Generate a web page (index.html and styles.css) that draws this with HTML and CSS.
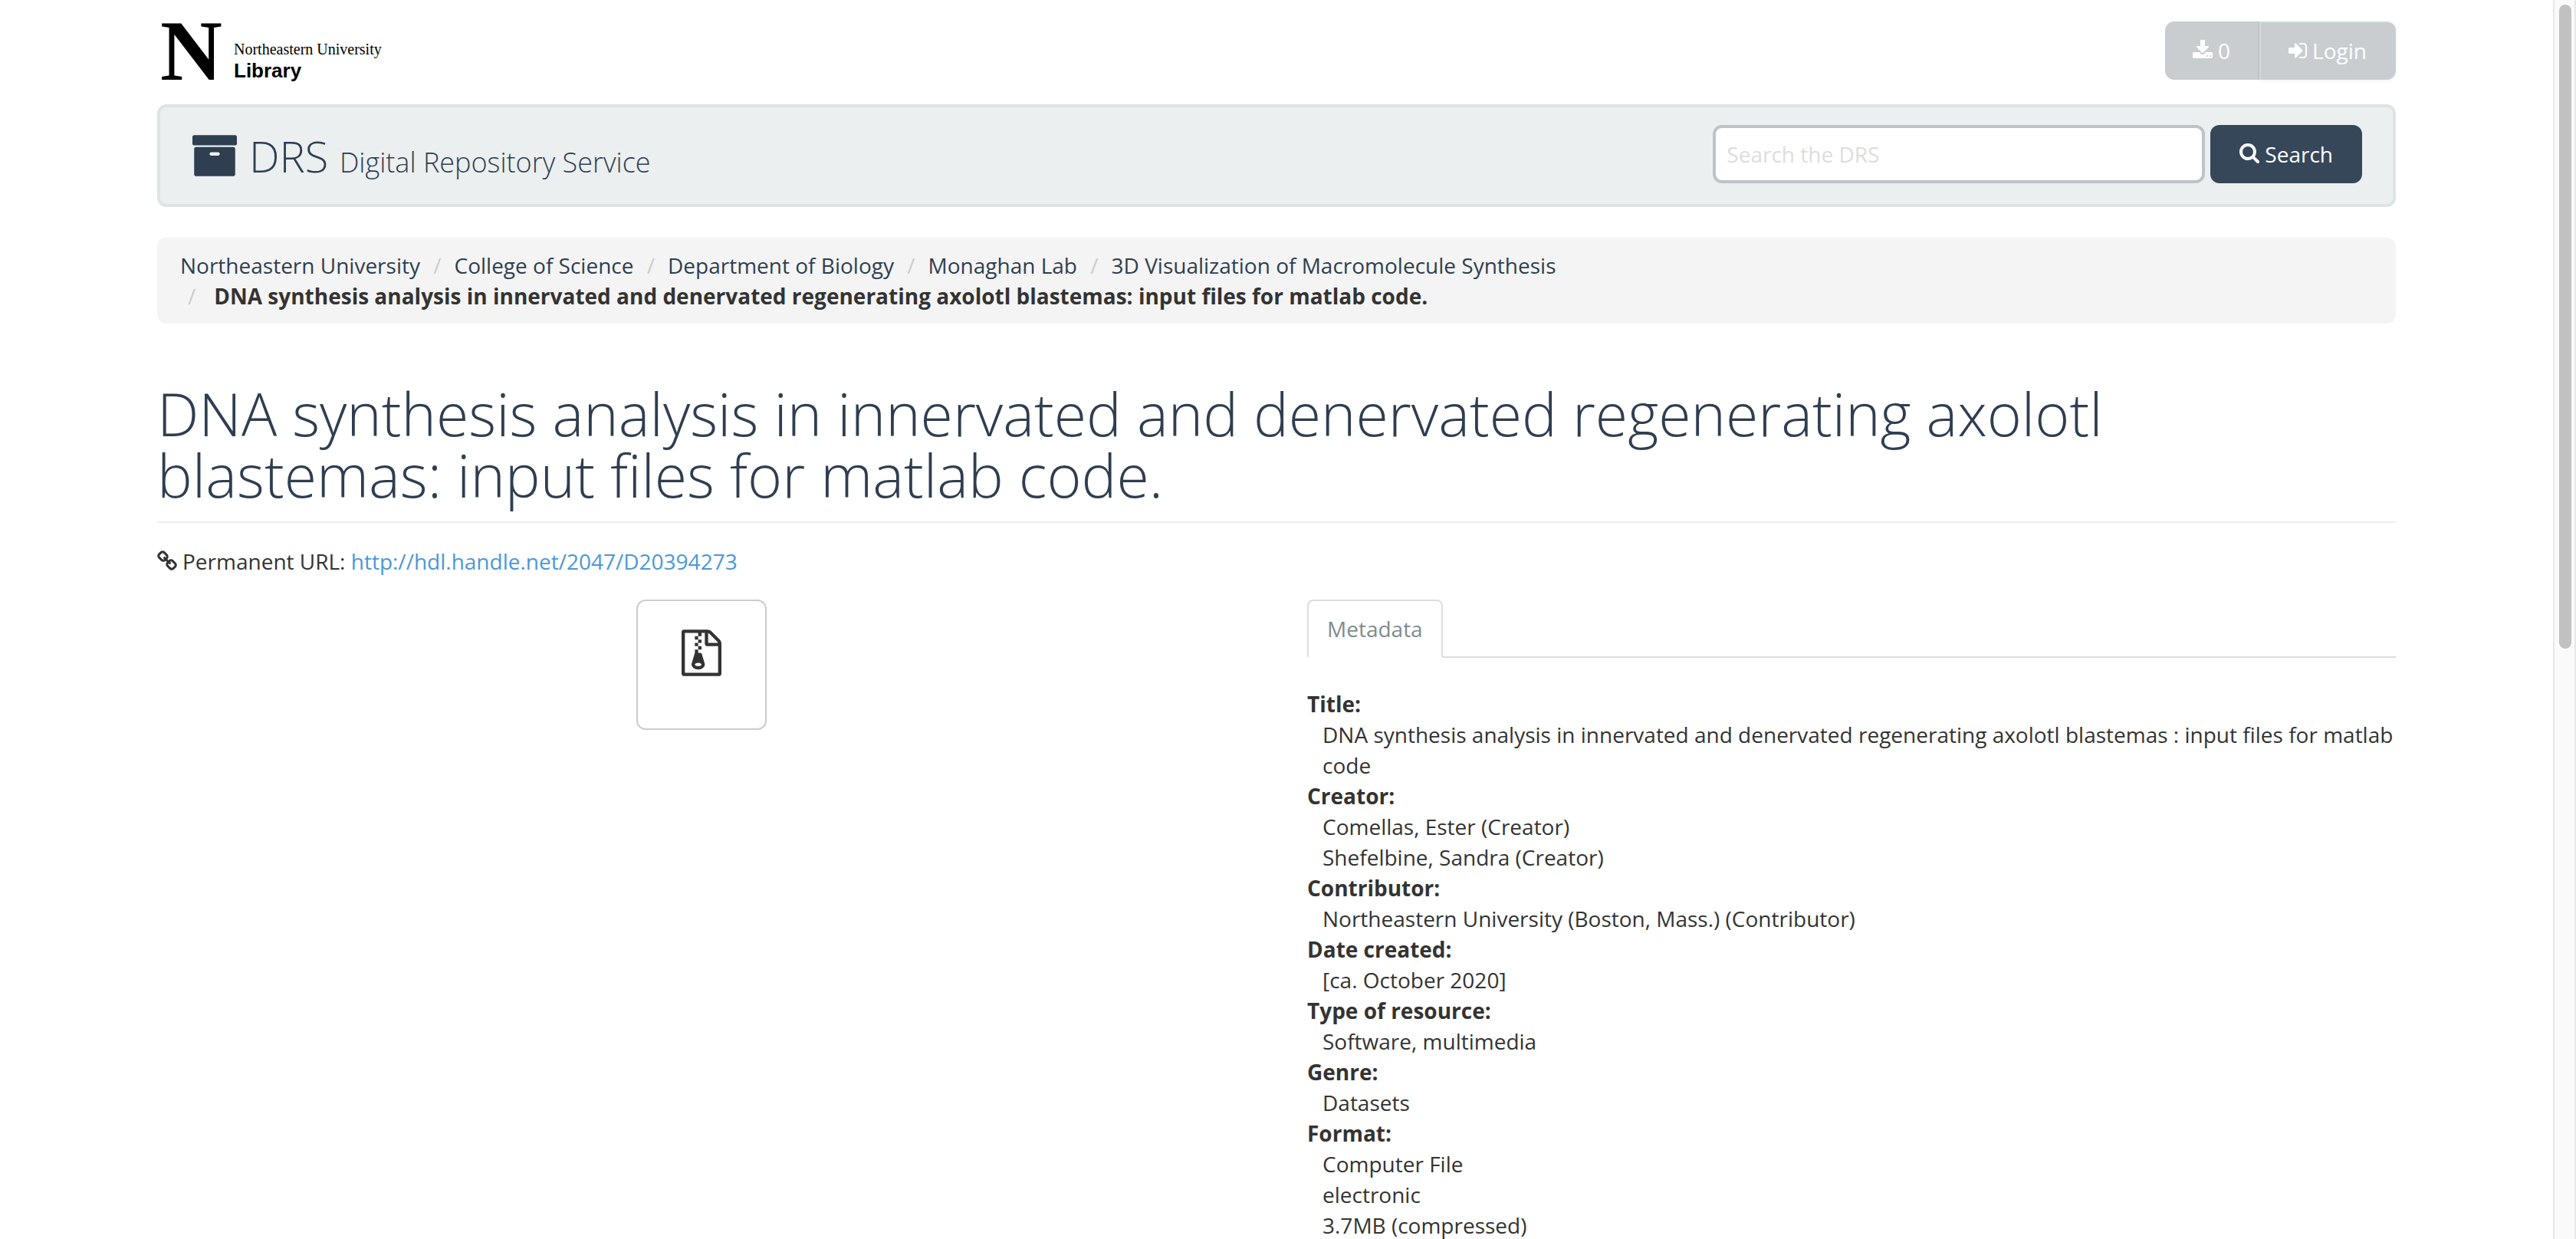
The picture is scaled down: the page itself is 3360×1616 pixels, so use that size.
FILE: index.html
```html
<!DOCTYPE html>
<html lang="en">
<head>
<meta charset="utf-8">
<title>DNA synthesis analysis - DRS</title>
<link rel="stylesheet" href="styles.css">
</head>
<body>
<div class="viewport">
<div class="page">
  <header class="topbar">
    <a class="logo" href="#">
      <span class="logo-mark">N</span>
      <span class="logo-words">
        <span class="logo-name">Northeastern University</span>
        <span class="logo-unit">Library</span>
      </span>
    </a>
    <div class="btn-group">
      <a class="btn btn-cart" href="#"><svg class="icon-26" viewBox="64 0 1664 1792"><path d="M1344 1344q0-26-19-45t-45-19-45 19-19 45 19 45 45 19 45-19 19-45zm256 0q0-26-19-45t-45-19-45 19-19 45 19 45 45 19 45-19 19-45zm128-224v320q0 40-28 68t-68 28h-1472q-40 0-68-28t-28-68v-320q0-40 28-68t68-28h465l135 136q58 56 136 56t136-56l136-136h464q40 0 68 28t28 68zm-325-569q17 41-14 70l-448 448q-18 19-45 19t-45-19l-448-448q-31-29-14-70 17-39 59-39h256v-448q0-26 19-45t45-19h256q26 0 45 19t19 45v448h256q42 0 59 39z"/></svg>0</a>
      <a class="btn btn-login" href="#"><svg class="icon-24" viewBox="128 0 1536 1792"><path d="M1312 896q0 26-19 45l-544 544q-19 19-45 19t-45-19-19-45v-288h-448q-26 0-45-19t-19-45v-384q0-26 19-45t45-19h448v-288q0-26 19-45t45-19 45 19l544 544q19 19 19 45zm352-352v704q0 119-84.500 203.500t-203.500 84.500h-320q-13 0-22.500-9.500t-9.500-22.500q0-4-1-20t-.5-26.500 3-23.500 10-19.500 20.500-6.500h320q66 0 113-47t47-113v-704q0-66-47-113t-113-47h-312l-11.500-1-11.500-3-8-5.500-7-9-2-13.500q0-4-1-20t-.5-26.500 3-23.500 10-19.500 20.500-6.500h320q119 0 203.500 84.500t84.500 203.500z"/></svg>Login</a>
    </div>
  </header>

  <div class="banner">
    <a class="brand" href="#">
      <svg class="brand-icon" viewBox="64 128 1664 1536"><path d="M1088 832q0-26-19-45t-45-19h-256q-26 0-45 19t-19 45 19 45 45 19h256q26 0 45-19t19-45zm576-192v960q0 26-19 45t-45 19h-1408q-26 0-45-19t-19-45v-960q0-26 19-45t45-19h1408q26 0 45 19t19 45zm64-448v256q0 26-19 45t-45 19h-1536q-26 0-45-19t-19-45v-256q0-26 19-45t45-19h1536q26 0 45 19t19 45z"/></svg>
      <span class="brand-text">DRS <small>Digital Repository Service</small></span>
    </a>
    <form class="search">
      <input type="text" class="search-input" aria-label="Search the DRS" placeholder="Search the DRS">
      <button type="submit" class="btn btn-search"><svg class="icon-26" viewBox="64 128 1664 1792"><path d="M1216 832q0-185-131.500-316.500t-316.500-131.500-316.500 131.500-131.500 316.500 131.500 316.500 316.500 131.500 316.500-131.500 131.500-316.500zm512 832q0 52-38 90t-90 38q-54 0-90-38l-343-342q-179 124-399 124-143 0-273.500-55.500t-225-150-150-225-55.500-273.500 55.500-273.500 150-225 225-150 273.500-55.500 273.500 55.500 225 150 150 225 55.500 273.500q0 220-124 399l343 343q37 37 37 90z"/></svg>Search</button>
    </form>
  </div>

  <nav aria-label="Breadcrumb">
    <ol class="breadcrumb">
      <li><a href="#">Northeastern University</a></li>
      <li><a href="#">College of Science</a></li>
      <li><a href="#">Department of Biology</a></li>
      <li><a href="#">Monaghan Lab</a></li>
      <li><a href="#">3D Visualization of Macromolecule Synthesis</a></li>
      <li class="current">DNA synthesis analysis in innervated and denervated regenerating axolotl blastemas: input files for matlab code.</li>
    </ol>
  </nav>

  <main>
    <h1>DNA synthesis analysis in innervated and denervated regenerating axolotl blastemas: input files for matlab code.</h1>
    <p class="permalink"><svg class="icon-26" viewBox="64 0 1664 1792"><path d="M1520 1216q0-40-28-68l-208-208q-28-28-68-28-42 0-72 32 3 3 19 18.500t21.500 21.500 15 19 13 25.500 3.500 27.500q0 40-28 68t-68 28q-15 0-27.500-3.500t-25.500-13-19-15-21.500-21.500-18.500-19q-33 31-33 73 0 40 28 68l206 207q27 27 68 27 40 0 68-26l147-146q28-28 28-67zm-703-705q0-40-28-68l-206-207q-28-28-68-28-39 0-68 27l-147 146q-28 28-28 67 0 40 28 68l208 208q27 27 68 27 42 0 72-31-3-3-19-18.500t-21.500-21.500-15-19-13-25.500-3.500-27.500q0-40 28-68t68-28q15 0 27.500 3.500t25.500 13 19 15 21.500 21.500 18.500 19q33-31 33-73zm895 705q0 120-85 203l-147 146q-83 83-203 83-121 0-204-85l-206-207q-83-83-83-203 0-123 88-209l-88-88q-86 88-208 88-120 0-204-84l-208-208q-84-84-84-204t85-203l147-146q83-83 203-83 121 0 204 85l206 207q83 83 83 203 0 123-88 209l88 88q86-88 208-88 120 0 204 84l208 208q84 84 84 204z"/></svg><span>Permanent URL: <a href="#">http://hdl.handle.net/2047/D20394273</a></span></p>

    <div class="columns">
      <div class="preview">
        <div class="thumb">
          <svg class="thumb-icon" viewBox="128 0 1536 1792"><path fill-rule="evenodd" d="M768 384v-128h-128v128h128zm128 128v-128h-128v128h128zm-128 128v-128h-128v128h128zm128 128v-128h-128v128h128zm700-388q28 28 48 76t20 88v1152q0 40-28 68t-68 28h-1344q-40 0-68-28t-28-68v-1600q0-40 28-68t68-28h896q40 0 88 20t76 48zm-444-244v376h376q-10-29-22-41l-313-313q-12-12-41-22zm384 1528v-1024h-416q-40 0-68-28t-28-68v-416h-128v128h-128v-128h-512v1536h1280zm-627-721l107 349q8 27 8 52 0 83-72.500 137.500t-183.500 54.500-183.500-54.500-72.500-137.500q0-25 8-52 21-63 120-396v-128h128v128h79q22 0 39 13t23 34zm-141 465q53 0 90.500-19t37.500-45-37.500-45-90.500-19-90.500 19-37.500 45 37.500 45 90.500 19z"/></svg>
        </div>
      </div>
      <section class="details">
        <div class="tabs"><a class="tab" href="#metadata">Metadata</a></div>
        <dl class="metadata" id="metadata">
          <dt>Title:</dt>
          <dd>DNA synthesis analysis in innervated and denervated regenerating axolotl blastemas : input files for matlab code</dd>
          <dt>Creator:</dt>
          <dd>Comellas, Ester (Creator)</dd>
          <dd>Shefelbine, Sandra (Creator)</dd>
          <dt>Contributor:</dt>
          <dd>Northeastern University (Boston, Mass.) (Contributor)</dd>
          <dt>Date created:</dt>
          <dd>[ca. October 2020]</dd>
          <dt>Type of resource:</dt>
          <dd>Software, multimedia</dd>
          <dt>Genre:</dt>
          <dd>Datasets</dd>
          <dt>Format:</dt>
          <dd>Computer File</dd>
          <dd>electronic</dd>
          <dd>3.7MB (compressed)</dd>
        </dl>
      </section>
    </div>
  </main>
</div>
<div class="scrollbar"><div class="scroll-thumb"></div></div>
</div>
</body>
</html>
```
FILE: styles.css
```css
* {
  box-sizing: border-box;
}

body {
  margin: 0;
  background: #fff;
  color: #333;
  font: 28px/40px "Open Sans", "Noto Sans", sans-serif;
}

a {
  color: #4c97d8;
  text-decoration: none;
}

svg {
  display: block;
  flex: none;
  fill: currentColor;
}

.icon-24 {
  width: 24px;
  height: 28px;
}

.icon-26 {
  width: 26px;
  height: 28px;
}

.viewport {
  display: grid;
  grid-template-columns: minmax(0, 1fr) 30px;
  height: 100vh;
  overflow: hidden;
}

.page {
  width: 100%;
  max-width: 3000px;
  margin: 0 auto;
  padding: 28px 40px 0;
}

/* Top bar */

.topbar {
  display: flex;
  justify-content: space-between;
  height: 76px;
  margin-bottom: 32px;
}

.logo {
  display: flex;
  align-items: flex-end;
  gap: 8px;
  padding-left: 4px;
  color: #000;
}

.logo-mark {
  width: 88px;
  font: bold 112px/76px "Liberation Serif", serif;
}

.logo-words {
  display: flex;
  flex-direction: column;
  gap: 4px;
}

.logo-name {
  font: 20px/24px "Liberation Serif", serif;
}

.logo-unit {
  font: bold 26px/24px "Liberation Sans", sans-serif;
}

.btn-group {
  display: flex;
}

.btn {
  display: flex;
  align-items: center;
  gap: 7px;
  height: 76px;
  padding: 0 38px;
  border: 0;
  border-radius: 12px;
  background: #c9cdd0;
  color: #fff;
  font: inherit;
}

.btn-cart {
  padding: 0 36px;
  border-right: 2px solid #c2c7ca;
  border-radius: 12px 0 0 12px;
}

.btn-login {
  border-radius: 0 12px 12px 0;
  box-shadow: inset 2px 2px 0 rgba(255, 255, 255, 0.2), 0 2px 4px rgba(0, 0, 0, 0.05);
}

.btn-search {
  background: #364759;
}

/* Banner */

.banner {
  display: flex;
  justify-content: space-between;
  align-items: center;
  padding: 23px 40px 27px;
  border: 4px solid #dee4e6;
  border-radius: 12px;
  background: #ebeff0;
}

.brand {
  display: flex;
  align-items: center;
  gap: 16px;
  padding: 4px 0 0 2px;
  color: #2f3e50;
}

.brand-icon {
  width: 58px;
  height: 54px;
}

.brand-text {
  font-size: 56px;
  font-weight: 300;
  line-height: 72px;
}

.brand-text small {
  font-size: 36px;
  line-height: 40px;
}

.search {
  display: flex;
  gap: 7px;
}

.search-input {
  width: 642px;
  height: 76px;
  padding: 0 14px;
  border: 4px solid #bdc3c7;
  border-radius: 12px;
  background: #fff;
  color: #333;
  font: inherit;
}

.search-input::placeholder {
  color: #ddd;
  opacity: 1;
}

/* Breadcrumb */

.breadcrumb {
  margin: 40px 0 0;
  padding: 16px 30px;
  border-radius: 12px;
  background: #f4f4f4;
  list-style: none;
}

.breadcrumb li {
  display: inline-block;
}

.breadcrumb a {
  color: #2f3e50;
}

.breadcrumb li + li::before {
  content: "/";
  padding: 0 17px 0 10px;
  color: #ccc;
}

.breadcrumb .current {
  font-weight: 700;
}

.breadcrumb li.current::before {
  padding-right: 24px;
  font-weight: 400;
}

/* Record */

h1 {
  margin: 78px 0 0;
  padding-bottom: 20px;
  border-bottom: 2px solid #ebeff0;
  color: #2f3e50;
  font-size: 77px;
  font-weight: 300;
  line-height: 80px;
}

.permalink {
  display: flex;
  align-items: center;
  gap: 7px;
  margin: 30px 0;
}

.columns {
  display: grid;
  grid-template-columns: minmax(0, 1fr) minmax(0, 1fr);
  gap: 80px;
}

.thumb {
  width: 170px;
  height: 170px;
  margin: 0 auto;
  padding-top: 37px;
  border: 2px solid #ccc;
  border-radius: 12px;
}

.thumb-icon {
  width: 52px;
  height: 61px;
  margin: 0 auto;
}

.tabs {
  display: flex;
  border-bottom: 2px solid #ddd;
}

.tab {
  margin-bottom: -2px;
  padding: 16px 24px;
  border: 2px solid #ddd;
  border-bottom-color: #fff;
  border-radius: 8px 8px 0 0;
  background: #fff;
  color: #7f8c8d;
}

.metadata {
  margin: 40px 0 0;
}

.metadata dt {
  font-weight: 700;
}

.metadata dd {
  margin: 0 0 0 20px;
}

/* Scroll track */

.scrollbar {
  padding: 6px 4px 0 6px;
  border: solid #e8e8e8;
  border-width: 0 2px;
  background: #fafafa;
}

.scroll-thumb {
  width: 16px;
  height: 52vh;
  border-radius: 8px;
  background: #c1c1c1;
}
```
